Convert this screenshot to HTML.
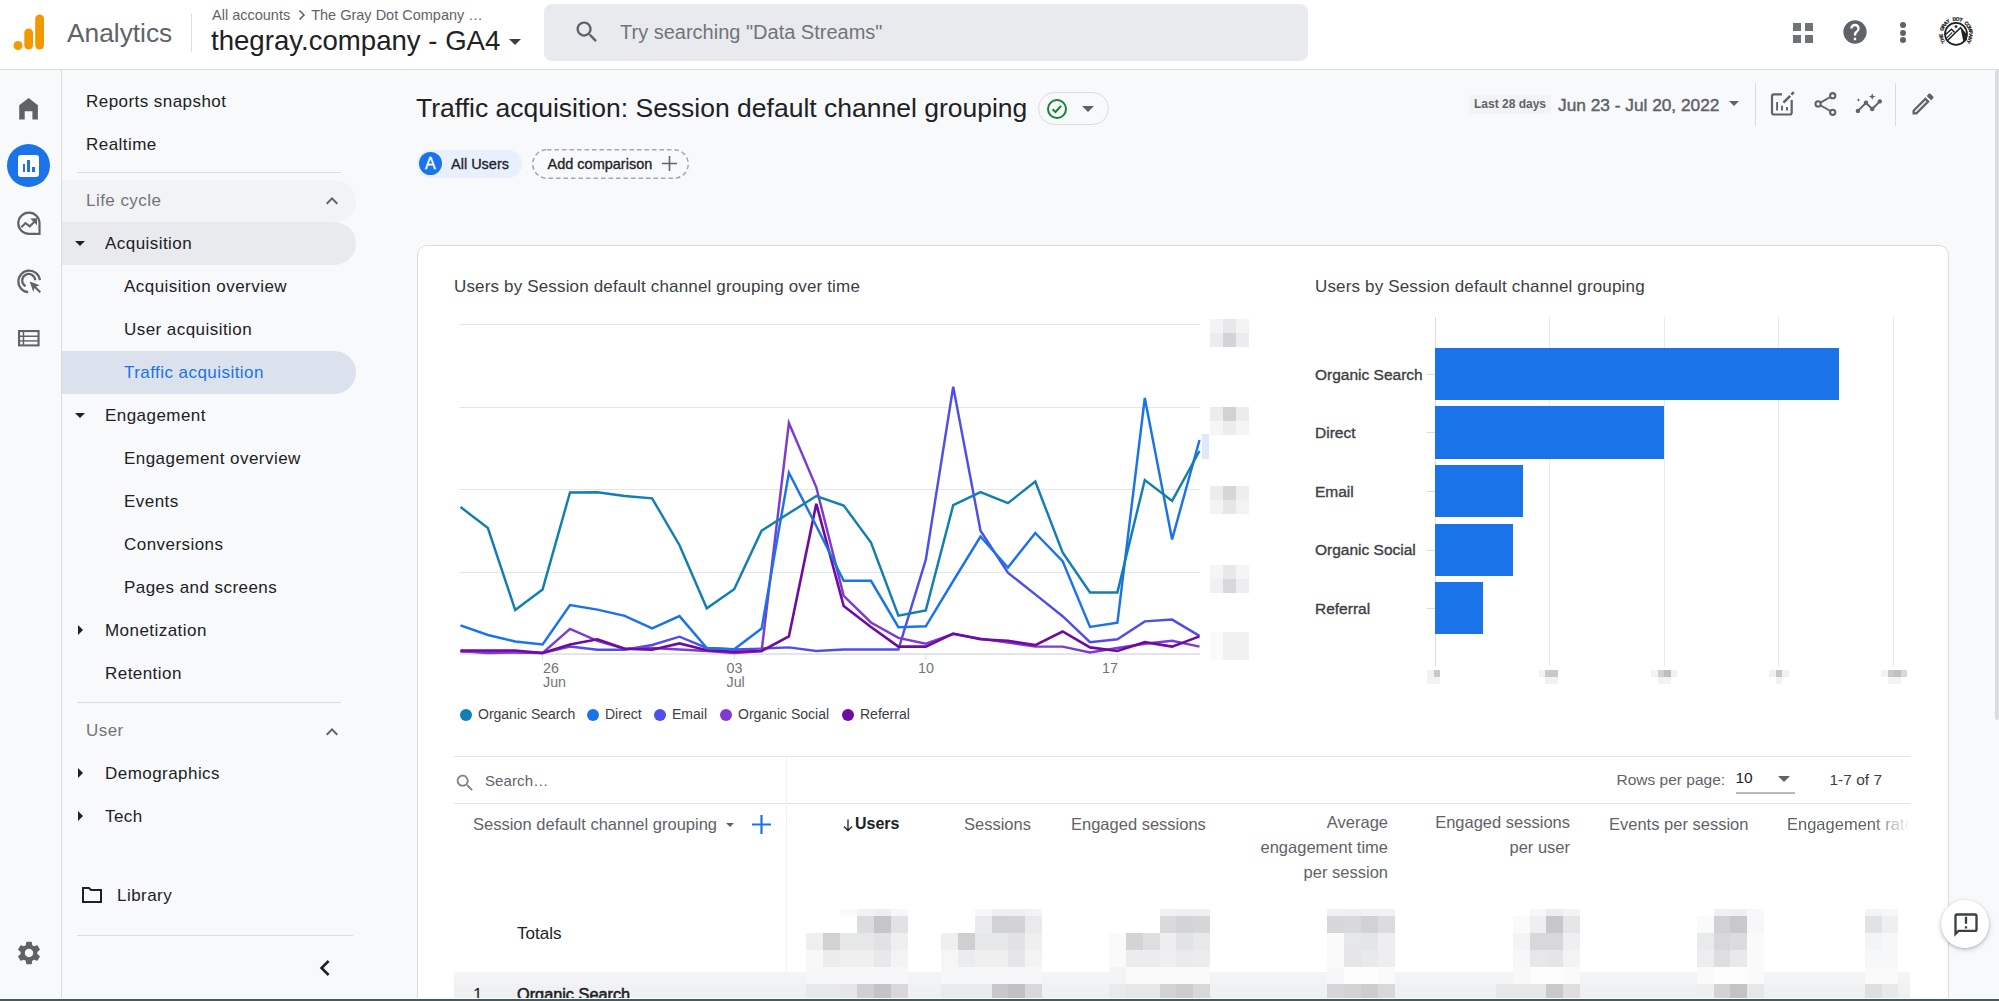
<!DOCTYPE html>
<html><head><meta charset="utf-8">
<style>
*{box-sizing:border-box;margin:0;padding:0}
html,body{width:1999px;height:1001px;overflow:hidden;background:#f8f9fa;font-family:"Liberation Sans",sans-serif;color:#202124}
.a{position:absolute;white-space:nowrap}
#hdr{position:absolute;left:0;top:0;width:1999px;height:70px;background:#fff;border-bottom:1px solid #dadce0}
#rail{position:absolute;left:0;top:70px;width:62px;height:931px;border-right:1px solid #dadce0;background:#f8f9fa}
.nav{font-size:17px;letter-spacing:0.45px;color:#202124}
.pill{position:absolute;left:62px;width:294px;border-radius:0 22px 22px 0}
</style></head><body>
<div id="hdr">
  <!-- logo -->
  <svg class="a" style="left:12px;top:13px" width="34" height="38" viewBox="0 0 34 38">
    <circle cx="6" cy="32.5" r="4.5" fill="#f29900"/>
    <rect x="12.3" y="15.5" width="8.7" height="21" rx="4.35" fill="#f29900"/>
    <rect x="23.2" y="1.5" width="8.8" height="35" rx="4.4" fill="#f29900"/>
  </svg>
  <div class="a" style="left:67px;top:17.5px;font-size:26.3px;color:#5f6368">Analytics</div>
  <div class="a" style="left:191px;top:13.5px;width:1px;height:38px;background:#dadce0"></div>
  <div class="a" style="left:212px;top:7px;font-size:14.5px;color:#5f6368">All accounts<span style="display:inline-block;width:21px"></span>The Gray Dot Company …</div>
  <svg class="a" style="left:297px;top:9px" width="10" height="12" viewBox="0 0 10 12"><path d="M2.5 1.5L7 6l-4.5 4.5" fill="none" stroke="#5f6368" stroke-width="1.6"/></svg>
  <div class="a" style="left:211px;top:25px;font-size:27.6px;color:#202124">thegray.company - GA4</div>
  <div class="a" style="left:509px;top:39px;border-left:6px solid transparent;border-right:6px solid transparent;border-top:6px solid #3c4043"></div>
  <!-- search -->
  <div class="a" style="left:544px;top:4px;width:764px;height:57px;background:#e9eaee;border-radius:8px"></div>
  <div class="a" style="left:620px;top:21px;font-size:20px;color:#70757a">Try searching "Data Streams"</div>
</div>

<div id="rail">
  <svg class="a" style="left:0;top:0" width="62" height="130"><path fill="#5f6368" d="M19.2 49.6V35.3L28.6 28.1L37.9 35.3V49.6H32.4V41.3H24.7V49.6Z"/></svg>
</div>
<div class="a" style="left:7.1px;top:144.3px;width:43px;height:43px;border-radius:50%;background:#1a73e8"></div>
<div class="a" style="left:18.1px;top:155.3px;width:21px;height:21.4px;border-radius:3px;background:#fff"></div>
<div class="a" style="left:22.5px;top:164px;width:2.5px;height:7.8px;background:#1a73e8"></div>
<div class="a" style="left:27.3px;top:160.2px;width:2.6px;height:11.6px;background:#1a73e8"></div>
<div class="a" style="left:32.4px;top:167.4px;width:2.5px;height:4.4px;background:#1a73e8"></div>
<svg class="a" style="left:15px;top:210px" width="28" height="28" viewBox="0 0 28 28"><path d="M24.5 13.2V23.8H13.9A10.6 10.6 0 1 1 24.5 13.2Z" fill="none" stroke="#5f6368" stroke-width="2.2"/><path d="M6.3 17.3L10.5 13.1L14.8 16.4L19.8 11.3" fill="none" stroke="#5f6368" stroke-width="2.1"/><path d="M15.3 8.6L22.2 8.3L21.9 15.2Z" fill="#5f6368"/><circle cx="22.3" cy="21.6" r="1" fill="#fff"/></svg>
<svg class="a" style="left:15px;top:267px" width="28" height="28" viewBox="0 0 28 28"><path d="M13.2 25.2A10.8 10.8 0 1 1 24.9 13.2" fill="none" stroke="#5f6368" stroke-width="2.2"/><path d="M10.6 19.2A6.5 6.5 0 1 1 20.2 13.3" fill="none" stroke="#5f6368" stroke-width="2.2"/><path d="M14.6 14.6L24.8 18.3L21 19.5L26 24.5L24.5 26L19.5 21L18.3 24.8Z" fill="#5f6368"/></svg>
<svg class="a" style="left:18px;top:330px" width="22" height="17" viewBox="0 0 22 17"><rect width="21.6" height="16.4" fill="#5f6368"/><g fill="#f8f9fa"><rect x="2.1" y="2.1" width="2.6" height="3.4"/><rect x="6.2" y="2.1" width="13.3" height="3.4"/><rect x="2.1" y="7" width="2.6" height="3.2"/><rect x="6.2" y="7" width="13.3" height="3.2"/><rect x="2.1" y="11.6" width="2.6" height="2.8"/><rect x="6.2" y="11.6" width="13.3" height="2.8"/></g></svg>
<svg class="a" style="left:14.5px;top:938.5px" width="28" height="28" viewBox="0 0 24 24"><path fill="#5f6368" d="M19.14 12.94c.04-.3.06-.61.06-.94 0-.32-.02-.64-.07-.94l2.03-1.58c.18-.14.23-.41.12-.61l-1.92-3.32c-.12-.22-.37-.29-.59-.22l-2.39.96c-.5-.38-1.03-.7-1.62-.94l-.36-2.54c-.04-.24-.24-.41-.48-.41h-3.84c-.24 0-.43.17-.47.41l-.36 2.54c-.59.24-1.130.57-1.62.94l-2.39-.96c-.22-.08-.47 0-.59.22L2.74 8.87c-.12.21-.08.47.12.61l2.03 1.58c-.05.3-.09.63-.09.94s.02.64.07.94l-2.03 1.58c-.18.14-.23.41-.12.61l1.92 3.32c.12.22.37.29.59.22l2.39-.96c.5.38 1.03.7 1.62.94l.36 2.54c.05.24.24.41.48.41h3.840c.24 0 .44-.17.47-.41l.36-2.54c.59-.24 1.13-.56 1.62-.94l2.39.96c.22.08.47 0 .59-.22l1.92-3.32c.12-.22.07-.47-.12-.61l-2.01-1.58zM12 15.6c-1.98 0-3.6-1.62-3.6-3.6s1.62-3.6 3.6-3.6 3.6 1.62 3.6 3.6-1.62 3.6-3.6 3.6z"/></svg>

<!-- nav panel -->
<div class="pill" style="top:180px;height:42px;background:#f1f3f4"></div>
<div class="pill" style="top:222px;height:43px;background:#e8eaed"></div>
<div class="pill" style="top:351px;height:43px;background:#dbe2ee"></div>
<div class="a" style="left:77px;top:172px;width:264px;height:1px;background:#dadce0"></div>
<div class="a" style="left:77px;top:702px;width:264px;height:1px;background:#dadce0"></div>
<div class="a" style="left:77px;top:935px;width:276px;height:1px;background:#dadce0"></div>
<div class="a nav" style="left:86px;top:92px">Reports snapshot</div>
<div class="a nav" style="left:86px;top:135px">Realtime</div>
<div class="a nav" style="left:86px;top:191px;color:#70757a">Life cycle</div>
<div class="a nav" style="left:105px;top:234px">Acquisition</div>
<div class="a nav" style="left:124px;top:277px">Acquisition overview</div>
<div class="a nav" style="left:124px;top:320px">User acquisition</div>
<div class="a nav" style="left:124px;top:363px;color:#1a73e8">Traffic acquisition</div>
<div class="a nav" style="left:105px;top:406px">Engagement</div>
<div class="a nav" style="left:124px;top:449px">Engagement overview</div>
<div class="a nav" style="left:124px;top:492px">Events</div>
<div class="a nav" style="left:124px;top:535px">Conversions</div>
<div class="a nav" style="left:124px;top:578px">Pages and screens</div>
<div class="a nav" style="left:105px;top:621px">Monetization</div>
<div class="a nav" style="left:105px;top:664px">Retention</div>
<div class="a nav" style="left:86px;top:721px;color:#70757a">User</div>
<div class="a nav" style="left:105px;top:764px">Demographics</div>
<div class="a nav" style="left:105px;top:807px">Tech</div>
<div class="a nav" style="left:117px;top:886px">Library</div>
<!-- triangles -->
<div class="a" style="left:75px;top:241px;border-left:5px solid transparent;border-right:5px solid transparent;border-top:5px solid #202124"></div>
<div class="a" style="left:75px;top:413px;border-left:5px solid transparent;border-right:5px solid transparent;border-top:5px solid #202124"></div>
<div class="a" style="left:78px;top:625px;border-top:5px solid transparent;border-bottom:5px solid transparent;border-left:5px solid #202124"></div>
<div class="a" style="left:78px;top:768px;border-top:5px solid transparent;border-bottom:5px solid transparent;border-left:5px solid #202124"></div>
<div class="a" style="left:78px;top:811px;border-top:5px solid transparent;border-bottom:5px solid transparent;border-left:5px solid #202124"></div>
<svg class="a" style="left:319.5px;top:189.3px" width="24" height="24" viewBox="0 0 24 24"><path fill="#5f6368" d="M12 8l-6 6 1.41 1.41L12 10.83l4.59 4.58L18 14z"/></svg>
<svg class="a" style="left:319.5px;top:719.5px" width="24" height="24" viewBox="0 0 24 24"><path fill="#5f6368" d="M12 8l-6 6 1.41 1.41L12 10.83l4.59 4.58L18 14z"/></svg>
<svg class="a" style="left:80px;top:884px" width="24" height="22" viewBox="0 0 24 22"><path fill="none" stroke="#202124" stroke-width="2" d="M3 4h6l2 2h10v12H3z"/></svg>
<svg class="a" style="left:308.5px;top:951.5px" width="32" height="32" viewBox="0 0 24 24"><path fill="#202124" d="M15.41 7.41L14 6l-6 6 6 6 1.41-1.41L10.83 12z"/></svg>


<!-- header right icons -->
<svg class="a" style="left:572.5px;top:18px" width="28" height="28" viewBox="0 0 24 24"><path fill="#5f6368" d="M15.5 14h-.79l-.28-.27C15.41 12.59 16 11.11 16 9.5 16 5.91 13.09 3 9.5 3S3 5.91 3 9.5 5.91 16 9.5 16c1.61 0 3.090-.59 4.23-1.57l.27.28v.79l5 4.99L20.49 19l-4.99-5zm-6 0C7.01 14 5 11.99 5 9.5S7.01 5 9.5 5 14 7.01 14 9.5 11.99 14 9.5 14z"/></svg>
<div class="a" style="left:1793px;top:23px;width:8px;height:8px;background:#6f7276"></div>
<div class="a" style="left:1805px;top:23px;width:8px;height:8px;background:#6f7276"></div>
<div class="a" style="left:1793px;top:35px;width:8px;height:8px;background:#6f7276"></div>
<div class="a" style="left:1805px;top:35px;width:8px;height:8px;background:#6f7276"></div>
<svg class="a" style="left:1841px;top:18px" width="28" height="28" viewBox="0 0 24 24"><path fill="#5f6368" d="M12 2C6.480 2 2 6.48 2 12s4.48 10 10 10 10-4.48 10-10S17.52 2 12 2zm1 17h-2v-2h2v2zm2.07-7.75l-.9.92C13.45 12.9 13 13.5 13 15h-2v-.5c0-1.1.45-2.1 1.17-2.83l1.24-1.26c.37-.36.59-.86.59-1.410 0-1.1-.9-2-2-2s-2 .9-2 2H8c0-2.21 1.79-4 4-4s4 1.79 4 4c0 .88-.36 1.68-.93 2.25z"/></svg>
<div class="a" style="left:1900px;top:22px;width:6px;height:6px;border-radius:50%;background:#5f6368"></div>
<div class="a" style="left:1900px;top:29.5px;width:6px;height:6px;border-radius:50%;background:#5f6368"></div>
<div class="a" style="left:1900px;top:37px;width:6px;height:6px;border-radius:50%;background:#5f6368"></div>
<svg class="a" style="left:1937px;top:14px" width="38" height="38" viewBox="0 0 38 38">
 <circle cx="19" cy="19.9" r="11" fill="#fff" stroke="#202124" stroke-width="1.7"/>
 <path d="M10.5 26.5L23.5 13.6L30 22" fill="none" stroke="#202124" stroke-width="1.5"/>
 <path d="M23.5 13.6L30 21.5L29.8 26L26.5 28.5L25.5 23.5z" fill="#202124"/>
 <path d="M8 21L14.5 15.2L17.5 18.2" fill="none" stroke="#202124" stroke-width="1.5"/>
 <path d="M9.3 24.3L15.2 18.3" stroke="#202124" stroke-width="1.1"/>
 <circle cx="19" cy="12.6" r="1.4" fill="#202124"/>
 <text x="0" y="0" transform="translate(7.76 26.82) rotate(238.4)" text-anchor="middle" font-family="Liberation Sans" font-weight="bold" font-size="5" fill="#202124" stroke="#202124" stroke-width="0.25">T</text><text x="0" y="0" transform="translate(6.50 24.15) rotate(251.2)" text-anchor="middle" font-family="Liberation Sans" font-weight="bold" font-size="5" fill="#202124" stroke="#202124" stroke-width="0.25">H</text><text x="0" y="0" transform="translate(5.87 21.28) rotate(264.0)" text-anchor="middle" font-family="Liberation Sans" font-weight="bold" font-size="5" fill="#202124" stroke="#202124" stroke-width="0.25">E</text><text x="0" y="0" transform="translate(6.56 15.47) rotate(289.6)" text-anchor="middle" font-family="Liberation Sans" font-weight="bold" font-size="5" fill="#202124" stroke="#202124" stroke-width="0.25">G</text><text x="0" y="0" transform="translate(7.85 12.83) rotate(302.4)" text-anchor="middle" font-family="Liberation Sans" font-weight="bold" font-size="5" fill="#202124" stroke="#202124" stroke-width="0.25">R</text><text x="0" y="0" transform="translate(9.70 10.53) rotate(315.2)" text-anchor="middle" font-family="Liberation Sans" font-weight="bold" font-size="5" fill="#202124" stroke="#202124" stroke-width="0.25">A</text><text x="0" y="0" transform="translate(12.01 8.71) rotate(328.0)" text-anchor="middle" font-family="Liberation Sans" font-weight="bold" font-size="5" fill="#202124" stroke="#202124" stroke-width="0.25">Y</text><text x="0" y="0" transform="translate(17.53 6.78) rotate(353.6)" text-anchor="middle" font-family="Liberation Sans" font-weight="bold" font-size="5" fill="#202124" stroke="#202124" stroke-width="0.25">D</text><text x="0" y="0" transform="translate(20.47 6.78) rotate(366.4)" text-anchor="middle" font-family="Liberation Sans" font-weight="bold" font-size="5" fill="#202124" stroke="#202124" stroke-width="0.25">O</text><text x="0" y="0" transform="translate(23.34 7.43) rotate(379.2)" text-anchor="middle" font-family="Liberation Sans" font-weight="bold" font-size="5" fill="#202124" stroke="#202124" stroke-width="0.25">T</text><text x="0" y="0" transform="translate(28.30 10.53) rotate(404.8)" text-anchor="middle" font-family="Liberation Sans" font-weight="bold" font-size="5" fill="#202124" stroke="#202124" stroke-width="0.25">C</text><text x="0" y="0" transform="translate(30.15 12.83) rotate(417.6)" text-anchor="middle" font-family="Liberation Sans" font-weight="bold" font-size="5" fill="#202124" stroke="#202124" stroke-width="0.25">O</text><text x="0" y="0" transform="translate(31.44 15.47) rotate(430.4)" text-anchor="middle" font-family="Liberation Sans" font-weight="bold" font-size="5" fill="#202124" stroke="#202124" stroke-width="0.25">M</text><text x="0" y="0" transform="translate(32.11 18.34) rotate(443.2)" text-anchor="middle" font-family="Liberation Sans" font-weight="bold" font-size="5" fill="#202124" stroke="#202124" stroke-width="0.25">P</text><text x="0" y="0" transform="translate(32.13 21.28) rotate(456.0)" text-anchor="middle" font-family="Liberation Sans" font-weight="bold" font-size="5" fill="#202124" stroke="#202124" stroke-width="0.25">A</text><text x="0" y="0" transform="translate(31.50 24.15) rotate(468.8)" text-anchor="middle" font-family="Liberation Sans" font-weight="bold" font-size="5" fill="#202124" stroke="#202124" stroke-width="0.25">N</text><text x="0" y="0" transform="translate(30.24 26.82) rotate(481.6)" text-anchor="middle" font-family="Liberation Sans" font-weight="bold" font-size="5" fill="#202124" stroke="#202124" stroke-width="0.25">Y</text>
</svg>

<!-- title -->
<div class="a" style="left:416px;top:93px;font-size:26.5px;color:#202124">Traffic acquisition: Session default channel grouping</div>
<div class="a" style="left:1038px;top:92px;width:71px;height:33px;border:1px solid #dadce0;border-radius:17px"></div>
<div class="a" style="left:1047px;top:99px;width:20px;height:20px;border:2px solid #188038;border-radius:50%"></div>
<svg class="a" style="left:1051px;top:103px" width="12" height="12" viewBox="0 0 12 12"><path d="M1.5 6.2l3 2.8 5.5-6" fill="none" stroke="#188038" stroke-width="2"/></svg>
<div class="a" style="left:1082px;top:106px;border-left:6px solid transparent;border-right:6px solid transparent;border-top:6px solid #5f6368"></div>

<!-- chips -->
<div class="a" style="left:417px;top:150px;width:105px;height:28px;border-radius:14px;background:#e8f0fe"></div>
<div class="a" style="left:418.5px;top:151.8px;width:23.5px;height:23.5px;border-radius:50%;background:#1a73e8;color:#fff;font-size:16px;text-align:center;line-height:23.5px;-webkit-text-stroke:0.3px #fff">A</div>
<div class="a" style="left:451px;top:155.8px;font-size:14.5px;color:#202124;-webkit-text-stroke:0.3px #202124">All Users</div>
<svg class="a" style="left:532px;top:149px" width="157" height="30"><rect x="0.75" y="0.75" width="155.5" height="28.5" rx="14.25" fill="none" stroke="#a3a7ab" stroke-width="1.5" stroke-dasharray="4.5 3"/></svg>
<div class="a" style="left:547.5px;top:155.8px;font-size:14.5px;color:#202124;-webkit-text-stroke:0.3px #202124">Add comparison</div>
<svg class="a" style="left:661px;top:155px" width="17" height="17" viewBox="0 0 17 17"><path d="M8.5 1v15M1 8.5h15" stroke="#5f6368" stroke-width="1.6"/></svg>

<!-- date range -->
<div class="a" style="left:1469px;top:95px;width:82px;height:19px;background:#f1f3f4;border-radius:2px"></div>
<div class="a" style="left:1474px;top:97px;font-size:12px;font-weight:bold;color:#5f6368">Last 28 days</div>
<div class="a" style="left:1558px;top:94.7px;font-size:17.3px;color:#5f6368;-webkit-text-stroke:0.45px #5f6368">Jun 23 - Jul 20, 2022</div>
<div class="a" style="left:1729px;top:101px;border-left:5.5px solid transparent;border-right:5.5px solid transparent;border-top:5.5px solid #5f6368"></div>
<div class="a" style="left:1755px;top:83px;width:1px;height:43px;background:#dadce0"></div>
<div class="a" style="left:1895px;top:83px;width:1px;height:43px;background:#dadce0"></div>
<svg class="a" style="left:1760px;top:80px" width="140" height="50" viewBox="0 0 140 50" fill="none" stroke="#5f6368">
<path d="M22 14.4H14a2 2 0 0 0-2 2V32.5a2 2 0 0 0 2 2H29.7a2 2 0 0 0 2-2V20" stroke-width="2.2"/>
<path d="M17.1 21.9V30.4M22 25.7V30.4M27 27.1V30.4" stroke-width="1.9"/>
<path d="M23.4 22.6L30.2 15.8M31.4 14.6L33.8 12.2" stroke-width="2.6"/>
<circle cx="72.7" cy="15.7" r="2.6" stroke-width="2.1"/><circle cx="58.1" cy="23.9" r="2.6" stroke-width="2.1"/><circle cx="72.7" cy="32.3" r="2.6" stroke-width="2.1"/>
<path d="M60.4 22.6L70.4 17M60.4 25.2L70.4 31" stroke-width="1.9"/>
<path d="M97.9 30.9L106 22.8L112.2 29L119.8 21.4" stroke-width="2"/>
<g fill="#5f6368" stroke="none"><circle cx="97.9" cy="30.9" r="2.2"/><circle cx="106" cy="22.8" r="2.2"/><circle cx="112.2" cy="29" r="2.2"/><circle cx="119.8" cy="21.4" r="2.2"/>
<path d="M112.2 13.2L113.1 15.7L115.6 16.6L113.1 17.5L112.2 20L111.3 17.5L108.8 16.6L111.3 15.7Z"/>
<path d="M98.4 17.9L98.9 19.5L100.5 20L98.9 20.5L98.4 22.1L97.9 20.5L96.3 20L97.9 19.5Z"/></g>
</svg>
<svg class="a" style="left:1909px;top:90px" width="28" height="28" viewBox="0 0 24 24"><path fill="#5f6368" d="M14.06 9.02l.92.92L5.92 19H5v-.92l9.06-9.06M17.66 3c-.25 0-.51.1-.7.29l-1.83 1.83 3.75 3.75 1.83-1.83c.39-.39.39-1.02 0-1.41l-2.34-2.34c-.2-.2-.45-.29-.71-.29zm-3.6 3.19L3 17.25V21h3.75L17.81 9.94l-3.75-3.75z"/></svg>


<div id="card" class="a" style="left:417px;top:245px;width:1532px;height:800px;background:#fff;border:1px solid #dadce0;border-radius:10px"></div>
<div class="a" style="left:454px;top:277px;font-size:17px;letter-spacing:0.16px;color:#3c4043">Users by Session default channel grouping over time</div>
<div class="a" style="left:1315px;top:277px;font-size:17px;letter-spacing:0.16px;color:#3c4043">Users by Session default channel grouping</div>
<svg class="a" style="left:0;top:0" width="1999" height="1001">
<line x1="460" x2="1200" y1="324.5" y2="324.5" stroke="#e3e5e8" stroke-width="1"/>
<line x1="460" x2="1200" y1="407.5" y2="407.5" stroke="#e3e5e8" stroke-width="1"/>
<line x1="460" x2="1200" y1="489.5" y2="489.5" stroke="#e3e5e8" stroke-width="1"/>
<line x1="460" x2="1200" y1="572.5" y2="572.5" stroke="#e3e5e8" stroke-width="1"/>
<line x1="460" x2="1200" y1="654" y2="654" stroke="#dadce0" stroke-width="1.3"/>
<line x1="542.5" x2="542.5" y1="654" y2="660" stroke="#dadce0"/><line x1="734.3" x2="734.3" y1="654" y2="660" stroke="#dadce0"/><line x1="925.8" x2="925.8" y1="654" y2="660" stroke="#dadce0"/><line x1="1117.4" x2="1117.4" y1="654" y2="660" stroke="#dadce0"/>
<polyline fill="none" stroke="#4f4ee8" stroke-width="2.45" stroke-linejoin="miter" points="460.5,651.5 487.9,652.0 515.2,652.0 542.6,653.0 570.0,646.6 597.4,649.8 624.7,649.8 652.1,645.0 679.5,636.7 706.8,648.0 734.2,649.5 761.6,648.6 788.9,647.4 816.3,651.0 843.7,649.5 871.0,649.5 898.4,649.5 925.8,559.7 953.2,386.8 980.5,530.7 1007.9,572.7 1035.3,594.4 1062.6,616.2 1090.0,642.2 1117.4,639.3 1144.8,621.4 1172.1,619.6 1199.5,635.9"/>
<polyline fill="none" stroke="#7d3bd2" stroke-width="2.45" stroke-linejoin="miter" points="460.5,651.0 487.9,653.0 515.2,652.5 542.6,653.0 570.0,628.9 597.4,640.8 624.7,648.8 652.1,648.0 679.5,649.5 706.8,651.0 734.2,653.0 761.6,651.0 788.9,423.0 816.3,487.3 843.7,595.9 871.0,622.5 898.4,637.9 925.8,643.7 953.2,634.1 980.5,638.8 1007.9,642.5 1035.3,646.6 1062.6,646.6 1090.0,652.4 1117.4,648.0 1144.8,643.7 1172.1,640.8 1199.5,646.6"/>
<polyline fill="none" stroke="#700aa0" stroke-width="2.6" stroke-linejoin="miter" points="460.5,650.5 487.9,650.5 515.2,650.5 542.6,653.0 570.0,644.4 597.4,639.3 624.7,648.8 652.1,649.8 679.5,643.4 706.8,650.2 734.2,651.7 761.6,651.0 788.9,636.4 816.3,503.8 843.7,606.0 871.0,627.0 898.4,646.6 925.8,646.6 953.2,633.5 980.5,639.3 1007.9,640.8 1035.3,645.1 1062.6,631.5 1090.0,647.4 1117.4,651.0 1144.8,642.2 1172.1,646.6 1199.5,636.4"/>
<polyline fill="none" stroke="#1a73e8" stroke-width="2.45" stroke-linejoin="miter" points="460.5,625.3 487.9,635.0 515.2,641.5 542.6,644.4 570.0,605.0 597.4,609.6 624.7,615.8 652.1,628.4 679.5,616.1 706.8,648.0 734.2,649.3 761.6,628.6 788.9,472.8 816.3,526.0 843.7,580.8 871.0,580.8 898.4,627.2 925.8,626.3 953.2,581.0 980.5,536.5 1007.9,567.5 1035.3,533.0 1062.6,561.1 1090.0,626.9 1117.4,622.8 1144.8,398.0 1172.1,539.4 1199.5,440.0"/>
<polyline fill="none" stroke="#127eb3" stroke-width="2.45" stroke-linejoin="miter" points="460.5,507.0 487.9,528.0 515.2,610.0 542.6,589.4 570.0,492.5 597.4,492.2 624.7,496.0 652.1,498.3 679.5,545.2 706.8,608.3 734.2,589.2 761.6,530.7 788.9,513.3 816.3,496.0 843.7,505.5 871.0,542.5 898.4,615.6 925.8,610.4 953.2,505.2 980.5,492.2 1007.9,503.2 1035.3,481.5 1062.6,552.4 1090.0,592.4 1117.4,592.4 1144.8,480.0 1172.1,500.9 1199.5,451.0"/>
</svg>
<div class="a" style="left:1210px;top:319.0px;width:13px;height:14px;background:#f3f3f4"></div><div class="a" style="left:1223px;top:319.0px;width:13px;height:14px;background:#e8e8ea"></div><div class="a" style="left:1236px;top:319.0px;width:13px;height:14px;background:#f3f3f4"></div><div class="a" style="left:1210px;top:332.5px;width:13px;height:14px;background:#ececee"></div><div class="a" style="left:1223px;top:332.5px;width:13px;height:14px;background:#d4d4d7"></div><div class="a" style="left:1236px;top:332.5px;width:13px;height:14px;background:#ececee"></div><div class="a" style="left:1210px;top:407.0px;width:13px;height:14px;background:#ececee"></div><div class="a" style="left:1223px;top:407.0px;width:13px;height:14px;background:#d2d2d5"></div><div class="a" style="left:1236px;top:407.0px;width:13px;height:14px;background:#ececee"></div><div class="a" style="left:1210px;top:420.5px;width:13px;height:14px;background:#f5f5f6"></div><div class="a" style="left:1223px;top:420.5px;width:13px;height:14px;background:#ececee"></div><div class="a" style="left:1236px;top:420.5px;width:13px;height:14px;background:#f5f5f6"></div><div class="a" style="left:1210px;top:486.0px;width:13px;height:14px;background:#ececee"></div><div class="a" style="left:1223px;top:486.0px;width:13px;height:14px;background:#d6d6d9"></div><div class="a" style="left:1236px;top:486.0px;width:13px;height:14px;background:#eeeef0"></div><div class="a" style="left:1210px;top:499.5px;width:13px;height:14px;background:#f3f3f4"></div><div class="a" style="left:1223px;top:499.5px;width:13px;height:14px;background:#e6e6e8"></div><div class="a" style="left:1236px;top:499.5px;width:13px;height:14px;background:#f3f3f4"></div><div class="a" style="left:1210px;top:565.0px;width:13px;height:14px;background:#f5f5f6"></div><div class="a" style="left:1223px;top:565.0px;width:13px;height:14px;background:#e8e8ea"></div><div class="a" style="left:1236px;top:565.0px;width:13px;height:14px;background:#f5f5f6"></div><div class="a" style="left:1210px;top:578.5px;width:13px;height:14px;background:#f0f0f2"></div><div class="a" style="left:1223px;top:578.5px;width:13px;height:14px;background:#d8d8db"></div><div class="a" style="left:1236px;top:578.5px;width:13px;height:14px;background:#eeeef0"></div><div class="a" style="left:1210px;top:632.0px;width:13px;height:14px;background:#fafafa"></div><div class="a" style="left:1223px;top:632.0px;width:13px;height:14px;background:#f1f1f2"></div><div class="a" style="left:1236px;top:632.0px;width:13px;height:14px;background:#f1f1f2"></div><div class="a" style="left:1210px;top:645.5px;width:13px;height:14px;background:#fafafa"></div><div class="a" style="left:1223px;top:645.5px;width:13px;height:14px;background:#f1f1f2"></div><div class="a" style="left:1236px;top:645.5px;width:13px;height:14px;background:#f1f1f2"></div><div class="a" style="left:1202px;top:434px;width:7px;height:25px;background:#dfe8fb"></div>
<div class="a" style="left:543px;top:660.8px;font-size:14.3px;color:#70757a;line-height:14px">26<br>Jun</div>
<div class="a" style="left:726.5px;top:660.8px;font-size:14.3px;color:#70757a;line-height:14px">03<br>Jul</div>
<div class="a" style="left:918px;top:660px;font-size:14.3px;color:#70757a">10</div>
<div class="a" style="left:1102px;top:660px;font-size:14.3px;color:#70757a">17</div>
<!-- legend -->
<div class="a" style="left:460px;top:708.7px;width:12px;height:12px;border-radius:50%;background:#127eb3"></div>
<div class="a" style="left:478px;top:706px;font-size:14px;color:#3c4043">Organic Search</div>
<div class="a" style="left:587px;top:708.7px;width:12px;height:12px;border-radius:50%;background:#1a73e8"></div>
<div class="a" style="left:605px;top:706px;font-size:14px;color:#3c4043">Direct</div>
<div class="a" style="left:654px;top:708.7px;width:12px;height:12px;border-radius:50%;background:#4f4ee8"></div>
<div class="a" style="left:672px;top:706px;font-size:14px;color:#3c4043">Email</div>
<div class="a" style="left:720px;top:708.7px;width:12px;height:12px;border-radius:50%;background:#7d3bd2"></div>
<div class="a" style="left:738px;top:706px;font-size:14px;color:#3c4043">Organic Social</div>
<div class="a" style="left:842px;top:708.7px;width:12px;height:12px;border-radius:50%;background:#700aa0"></div>
<div class="a" style="left:860px;top:706px;font-size:14px;color:#3c4043">Referral</div>
<!-- bar chart -->
<div class="a" style="left:1435px;top:317px;width:1px;height:349px;background:#dadce0"></div>
<div class="a" style="left:1549px;top:317px;width:1px;height:349px;background:#e8eaed"></div>
<div class="a" style="left:1664px;top:317px;width:1px;height:349px;background:#e8eaed"></div>
<div class="a" style="left:1778px;top:317px;width:1px;height:349px;background:#e8eaed"></div>
<div class="a" style="left:1893px;top:317px;width:1px;height:349px;background:#e8eaed"></div>
<div class="a" style="left:1435px;top:348px;width:404px;height:52px;background:#1a73e8"></div>
<div class="a" style="left:1435px;top:406px;width:229px;height:53px;background:#1a73e8"></div>
<div class="a" style="left:1435px;top:465px;width:88px;height:52px;background:#1a73e8"></div>
<div class="a" style="left:1435px;top:524px;width:78px;height:52px;background:#1a73e8"></div>
<div class="a" style="left:1435px;top:582px;width:48px;height:52px;background:#1a73e8"></div>
<div class="a" style="left:1315px;top:365.5px;font-size:15.5px;color:#3c4043;-webkit-text-stroke:0.35px #3c4043">Organic Search</div>
<div class="a" style="left:1315px;top:424px;font-size:15.5px;color:#3c4043;-webkit-text-stroke:0.35px #3c4043">Direct</div>
<div class="a" style="left:1315px;top:482.5px;font-size:15.5px;color:#3c4043;-webkit-text-stroke:0.35px #3c4043">Email</div>
<div class="a" style="left:1315px;top:541px;font-size:15.5px;color:#3c4043;-webkit-text-stroke:0.35px #3c4043">Organic Social</div>
<div class="a" style="left:1315px;top:599.5px;font-size:15.5px;color:#3c4043;-webkit-text-stroke:0.35px #3c4043">Referral</div>
<div class="a" style="left:1427px;top:374px;width:8px;height:1px;background:#dadce0"></div>
<div class="a" style="left:1427px;top:432px;width:8px;height:1px;background:#dadce0"></div>
<div class="a" style="left:1427px;top:491px;width:8px;height:1px;background:#dadce0"></div>
<div class="a" style="left:1427px;top:550px;width:8px;height:1px;background:#dadce0"></div>
<div class="a" style="left:1427px;top:608px;width:8px;height:1px;background:#dadce0"></div>

<div class="a" style="left:1427.3px;top:670px;width:6.6px;height:7px;background:#f1f1f2"></div><div class="a" style="left:1433.8px;top:670px;width:6.6px;height:7px;background:#c9c9cc"></div><div class="a" style="left:1427.3px;top:677px;width:6.6px;height:7px;background:#f3f3f4"></div><div class="a" style="left:1433.8px;top:677px;width:6.6px;height:7px;background:#f3f3f4"></div><div class="a" style="left:1538.7px;top:670px;width:6.6px;height:7px;background:#f3f3f4"></div><div class="a" style="left:1545.2px;top:670px;width:6.6px;height:7px;background:#c8c8cb"></div><div class="a" style="left:1551.7px;top:670px;width:6.6px;height:7px;background:#c8c8cb"></div><div class="a" style="left:1545.2px;top:677px;width:6.6px;height:7px;background:#f1f1f2"></div><div class="a" style="left:1551.7px;top:677px;width:6.6px;height:7px;background:#f3f3f4"></div><div class="a" style="left:1651.0px;top:670px;width:6.6px;height:7px;background:#f3f3f4"></div><div class="a" style="left:1657.5px;top:670px;width:6.6px;height:7px;background:#d0d0d3"></div><div class="a" style="left:1664.0px;top:670px;width:6.6px;height:7px;background:#bdbdc0"></div><div class="a" style="left:1670.5px;top:670px;width:6.6px;height:7px;background:#f1f1f2"></div><div class="a" style="left:1657.5px;top:677px;width:6.6px;height:7px;background:#f1f1f2"></div><div class="a" style="left:1664.0px;top:677px;width:6.6px;height:7px;background:#f3f3f4"></div><div class="a" style="left:1769.4px;top:670px;width:6.6px;height:7px;background:#f1f1f2"></div><div class="a" style="left:1775.9px;top:670px;width:6.6px;height:7px;background:#c6c6c9"></div><div class="a" style="left:1782.4px;top:670px;width:6.6px;height:7px;background:#f1f1f2"></div><div class="a" style="left:1775.9px;top:677px;width:6.6px;height:7px;background:#f1f1f2"></div><div class="a" style="left:1881.0px;top:670px;width:6.6px;height:7px;background:#f3f3f4"></div><div class="a" style="left:1887.5px;top:670px;width:6.6px;height:7px;background:#c8c8cb"></div><div class="a" style="left:1894.0px;top:670px;width:6.6px;height:7px;background:#c0c0c3"></div><div class="a" style="left:1900.5px;top:670px;width:6.6px;height:7px;background:#d8d8da"></div><div class="a" style="left:1887.5px;top:677px;width:6.6px;height:7px;background:#f3f3f4"></div><div class="a" style="left:1894.0px;top:677px;width:6.6px;height:7px;background:#f3f3f4"></div>
<!-- table -->
<div class="a" style="left:454px;top:755.5px;width:1456px;height:1.2px;background:#e3e5e8"></div>
<div class="a" style="left:454px;top:803px;width:1456px;height:1.2px;background:#e3e5e8"></div>
<div class="a" style="left:786px;top:756px;width:1px;height:245px;background:#eef0f1"></div>
<svg class="a" style="left:454px;top:771.5px" width="22" height="22" viewBox="0 0 24 24"><path fill="#80868b" d="M15.5 14h-.79l-.28-.27C15.41 12.59 16 11.11 16 9.5 16 5.91 13.09 3 9.5 3S3 5.91 3 9.5 5.91 16 9.5 16c1.61 0 3.09-.59 4.23-1.57l.27.28v.79l5 4.99L20.49 19l-4.99-5zm-6 0C7.01 14 5 11.99 5 9.5S7.01 5 9.5 5 14 7.01 14 9.5 11.99 14 9.5 14z"/></svg>
<div class="a" style="left:485px;top:772.2px;font-size:15px;color:#5f6368;letter-spacing:0.1px">Search…</div>
<div class="a" style="left:1616.5px;top:771.3px;font-size:15.5px;color:#5f6368">Rows per page:</div>
<div class="a" style="left:1735.5px;top:768.5px;font-size:15.5px;color:#202124">10</div>
<div class="a" style="left:1735.5px;top:791.5px;width:59.5px;height:2px;background:#b5b8bc"></div>
<div class="a" style="left:1778px;top:776px;border-left:6px solid transparent;border-right:6px solid transparent;border-top:6px solid #5f6368"></div>
<div class="a" style="left:1829.5px;top:771.3px;font-size:15.5px;color:#3c4043">1-7 of 7</div>
<div class="a" style="left:473px;top:815px;font-size:16.5px;color:#5f6368">Session default channel grouping</div>
<div class="a" style="left:726px;top:823px;border-left:4.5px solid transparent;border-right:4.5px solid transparent;border-top:4.5px solid #5f6368"></div>
<svg class="a" style="left:751px;top:814px" width="21" height="21" viewBox="0 0 21 21"><path d="M10.5 1v19M1 10.5h19" stroke="#1a73e8" stroke-width="2.2"/></svg>
<svg class="a" style="left:842px;top:818px" width="12" height="14" viewBox="0 0 12 14"><path d="M6 1.5v11M2 8.5l4 4 4-4" fill="none" stroke="#202124" stroke-width="1.3"/></svg>
<div class="a" style="left:855px;top:815.3px;font-size:16px;font-weight:bold;color:#202124">Users</div>
<div class="a" style="left:964px;top:815px;font-size:16.5px;color:#5f6368">Sessions</div>
<div class="a" style="left:1071px;top:815px;font-size:16.5px;color:#5f6368">Engaged sessions</div>
<div class="a" style="left:1188px;top:809.5px;width:200px;font-size:16.5px;color:#5f6368;text-align:right;line-height:25px;white-space:normal">Average<br>engagement time<br>per session</div>
<div class="a" style="left:1370px;top:810px;width:200px;font-size:16.5px;color:#5f6368;text-align:right;line-height:25px;white-space:normal">Engaged sessions<br>per user</div>
<div class="a" style="left:1609px;top:815px;font-size:16.5px;color:#5f6368">Events per session</div>
<div class="a" style="left:1787px;top:815px;font-size:16.5px;color:#5f6368;width:123px;overflow:hidden;-webkit-mask-image:linear-gradient(90deg,#000 70%,transparent)">Engagement rate</div>
<div class="a" style="left:517px;top:923.5px;font-size:17px;color:#202124">Totals</div>
<div class="a" style="left:454px;top:972px;width:1456px;height:29px;background:linear-gradient(#f4f5f6,#eceef0)"></div>
<div class="a" style="left:473px;top:985px;font-size:17px;color:#202124">1</div>
<div class="a" style="left:517px;top:984.7px;font-size:16.3px;color:#202124;-webkit-text-stroke:0.55px #202124">Organic Search</div>
<!-- pix -->
<div class="a" style="left:840px;top:909px;width:17px;height:7px;background:#fafafa"></div>
<div class="a" style="left:857px;top:909px;width:17px;height:7px;background:#f2f2f3"></div>
<div class="a" style="left:874px;top:909px;width:17px;height:7px;background:#eeeef0"></div>
<div class="a" style="left:891px;top:909px;width:17px;height:7px;background:#f6f7f8"></div>
<div class="a" style="left:857px;top:916px;width:17px;height:17px;background:#dcdcde"></div>
<div class="a" style="left:874px;top:916px;width:17px;height:17px;background:#c6c6c9"></div>
<div class="a" style="left:891px;top:916px;width:17px;height:17px;background:#e2e2e4"></div>
<div class="a" style="left:806px;top:933px;width:17px;height:17px;background:#efeff0"></div>
<div class="a" style="left:823px;top:933px;width:17px;height:17px;background:#d2d2d4"></div>
<div class="a" style="left:840px;top:933px;width:17px;height:17px;background:#e6e7e9"></div>
<div class="a" style="left:857px;top:933px;width:17px;height:17px;background:#e6e7e9"></div>
<div class="a" style="left:874px;top:933px;width:17px;height:17px;background:#e2e2e4"></div>
<div class="a" style="left:891px;top:933px;width:17px;height:17px;background:#efeff0"></div>
<div class="a" style="left:806px;top:950px;width:17px;height:17px;background:#f8f8f9"></div>
<div class="a" style="left:823px;top:950px;width:17px;height:17px;background:#ebeced"></div>
<div class="a" style="left:840px;top:950px;width:17px;height:17px;background:#efeff0"></div>
<div class="a" style="left:857px;top:950px;width:17px;height:17px;background:#efeff0"></div>
<div class="a" style="left:874px;top:950px;width:17px;height:17px;background:#e8e8ea"></div>
<div class="a" style="left:891px;top:950px;width:17px;height:17px;background:#f3f3f4"></div>
<div class="a" style="left:806px;top:967px;width:17px;height:17px;background:#f6f7f8"></div>
<div class="a" style="left:823px;top:967px;width:17px;height:17px;background:#f6f7f8"></div>
<div class="a" style="left:840px;top:967px;width:17px;height:17px;background:#f6f7f8"></div>
<div class="a" style="left:857px;top:967px;width:17px;height:17px;background:#f6f7f8"></div>
<div class="a" style="left:874px;top:967px;width:17px;height:17px;background:#f6f7f8"></div>
<div class="a" style="left:891px;top:967px;width:17px;height:17px;background:#f6f7f8"></div>
<div class="a" style="left:806px;top:984px;width:17px;height:15px;background:#e8e9ea"></div>
<div class="a" style="left:823px;top:984px;width:17px;height:15px;background:#e8e9ea"></div>
<div class="a" style="left:840px;top:984px;width:17px;height:15px;background:#e6e6e8"></div>
<div class="a" style="left:857px;top:984px;width:17px;height:15px;background:#d0d0d3"></div>
<div class="a" style="left:874px;top:984px;width:17px;height:15px;background:#c4c4c7"></div>
<div class="a" style="left:891px;top:984px;width:17px;height:15px;background:#d8d8da"></div>
<div class="a" style="left:975px;top:909px;width:17px;height:7px;background:#f6f7f8"></div>
<div class="a" style="left:992px;top:909px;width:16px;height:7px;background:#eeeff0"></div>
<div class="a" style="left:1008px;top:909px;width:17px;height:7px;background:#eeeff0"></div>
<div class="a" style="left:1025px;top:909px;width:17px;height:7px;background:#f3f3f4"></div>
<div class="a" style="left:975px;top:916px;width:17px;height:17px;background:#ebebed"></div>
<div class="a" style="left:992px;top:916px;width:16px;height:17px;background:#d2d2d5"></div>
<div class="a" style="left:1008px;top:916px;width:17px;height:17px;background:#d3d3d6"></div>
<div class="a" style="left:1025px;top:916px;width:17px;height:17px;background:#eaeaec"></div>
<div class="a" style="left:941px;top:933px;width:17px;height:17px;background:#efeff0"></div>
<div class="a" style="left:958px;top:933px;width:17px;height:17px;background:#cfcfd2"></div>
<div class="a" style="left:975px;top:933px;width:17px;height:17px;background:#e6e7e9"></div>
<div class="a" style="left:992px;top:933px;width:16px;height:17px;background:#e6e7e9"></div>
<div class="a" style="left:1008px;top:933px;width:17px;height:17px;background:#e2e2e4"></div>
<div class="a" style="left:1025px;top:933px;width:17px;height:17px;background:#efeff0"></div>
<div class="a" style="left:941px;top:950px;width:17px;height:17px;background:#f6f6f7"></div>
<div class="a" style="left:958px;top:950px;width:17px;height:17px;background:#ebeced"></div>
<div class="a" style="left:975px;top:950px;width:17px;height:17px;background:#efeff0"></div>
<div class="a" style="left:992px;top:950px;width:16px;height:17px;background:#efeff0"></div>
<div class="a" style="left:1008px;top:950px;width:17px;height:17px;background:#e6e6e8"></div>
<div class="a" style="left:1025px;top:950px;width:17px;height:17px;background:#f3f3f4"></div>
<div class="a" style="left:941px;top:967px;width:17px;height:17px;background:#f6f7f8"></div>
<div class="a" style="left:958px;top:967px;width:17px;height:17px;background:#f6f7f8"></div>
<div class="a" style="left:975px;top:967px;width:17px;height:17px;background:#f6f7f8"></div>
<div class="a" style="left:992px;top:967px;width:16px;height:17px;background:#f6f7f8"></div>
<div class="a" style="left:1008px;top:967px;width:17px;height:17px;background:#f6f7f8"></div>
<div class="a" style="left:1025px;top:967px;width:17px;height:17px;background:#f6f7f8"></div>
<div class="a" style="left:941px;top:984px;width:17px;height:15px;background:#e9eaeb"></div>
<div class="a" style="left:958px;top:984px;width:17px;height:15px;background:#e9eaeb"></div>
<div class="a" style="left:975px;top:984px;width:17px;height:15px;background:#e9eaeb"></div>
<div class="a" style="left:992px;top:984px;width:16px;height:15px;background:#c8c8cb"></div>
<div class="a" style="left:1008px;top:984px;width:17px;height:15px;background:#c0c0c3"></div>
<div class="a" style="left:1025px;top:984px;width:17px;height:15px;background:#d8d8da"></div>
<div class="a" style="left:1160px;top:909px;width:16px;height:7px;background:#f0f1f2"></div>
<div class="a" style="left:1176px;top:909px;width:17px;height:7px;background:#eeeff0"></div>
<div class="a" style="left:1193px;top:909px;width:17px;height:7px;background:#eeeff0"></div>
<div class="a" style="left:1160px;top:916px;width:16px;height:17px;background:#dadadd"></div>
<div class="a" style="left:1176px;top:916px;width:17px;height:17px;background:#d4d4d7"></div>
<div class="a" style="left:1193px;top:916px;width:17px;height:17px;background:#d6d6d9"></div>
<div class="a" style="left:1109px;top:933px;width:17px;height:17px;background:#fafafa"></div>
<div class="a" style="left:1126px;top:933px;width:17px;height:17px;background:#d4d4d7"></div>
<div class="a" style="left:1143px;top:933px;width:17px;height:17px;background:#dfdfe1"></div>
<div class="a" style="left:1160px;top:933px;width:16px;height:17px;background:#eeeef0"></div>
<div class="a" style="left:1176px;top:933px;width:17px;height:17px;background:#e2e3e5"></div>
<div class="a" style="left:1193px;top:933px;width:17px;height:17px;background:#e8e9eb"></div>
<div class="a" style="left:1109px;top:950px;width:17px;height:17px;background:#fafafa"></div>
<div class="a" style="left:1126px;top:950px;width:17px;height:17px;background:#ebeced"></div>
<div class="a" style="left:1143px;top:950px;width:17px;height:17px;background:#ececee"></div>
<div class="a" style="left:1160px;top:950px;width:16px;height:17px;background:#eeeff0"></div>
<div class="a" style="left:1176px;top:950px;width:17px;height:17px;background:#e9eaeb"></div>
<div class="a" style="left:1193px;top:950px;width:17px;height:17px;background:#ececee"></div>
<div class="a" style="left:1109px;top:967px;width:17px;height:17px;background:#f3f4f5"></div>
<div class="a" style="left:1126px;top:967px;width:17px;height:17px;background:#fafafa"></div>
<div class="a" style="left:1143px;top:967px;width:17px;height:17px;background:#fafafa"></div>
<div class="a" style="left:1160px;top:967px;width:16px;height:17px;background:#fafafa"></div>
<div class="a" style="left:1176px;top:967px;width:17px;height:17px;background:#fafafa"></div>
<div class="a" style="left:1193px;top:967px;width:17px;height:17px;background:#fafafa"></div>
<div class="a" style="left:1109px;top:984px;width:17px;height:15px;background:#e9eaeb"></div>
<div class="a" style="left:1126px;top:984px;width:17px;height:15px;background:#e6e7e9"></div>
<div class="a" style="left:1143px;top:984px;width:17px;height:15px;background:#e6e7e9"></div>
<div class="a" style="left:1160px;top:984px;width:16px;height:15px;background:#d3d3d5"></div>
<div class="a" style="left:1176px;top:984px;width:17px;height:15px;background:#cdcdd0"></div>
<div class="a" style="left:1193px;top:984px;width:17px;height:15px;background:#d8d8da"></div>
<div class="a" style="left:1327px;top:909px;width:17px;height:7px;background:#f0f1f2"></div>
<div class="a" style="left:1344px;top:909px;width:17px;height:7px;background:#eeeff0"></div>
<div class="a" style="left:1361px;top:909px;width:17px;height:7px;background:#f2f2f3"></div>
<div class="a" style="left:1378px;top:909px;width:17px;height:7px;background:#f2f2f3"></div>
<div class="a" style="left:1327px;top:916px;width:17px;height:17px;background:#d7d7da"></div>
<div class="a" style="left:1344px;top:916px;width:17px;height:17px;background:#d9d9dc"></div>
<div class="a" style="left:1361px;top:916px;width:17px;height:17px;background:#d2d2d5"></div>
<div class="a" style="left:1378px;top:916px;width:17px;height:17px;background:#dcdcde"></div>
<div class="a" style="left:1327px;top:933px;width:17px;height:17px;background:#fafafa"></div>
<div class="a" style="left:1344px;top:933px;width:17px;height:17px;background:#e6e7e9"></div>
<div class="a" style="left:1361px;top:933px;width:17px;height:17px;background:#e4e5e7"></div>
<div class="a" style="left:1378px;top:933px;width:17px;height:17px;background:#eeeef0"></div>
<div class="a" style="left:1327px;top:950px;width:17px;height:17px;background:#fafafa"></div>
<div class="a" style="left:1344px;top:950px;width:17px;height:17px;background:#e6e6e8"></div>
<div class="a" style="left:1361px;top:950px;width:17px;height:17px;background:#e8e9eb"></div>
<div class="a" style="left:1378px;top:950px;width:17px;height:17px;background:#eeeef0"></div>
<div class="a" style="left:1327px;top:967px;width:17px;height:17px;background:#f6f7f8"></div>
<div class="a" style="left:1344px;top:967px;width:17px;height:17px;background:#fdfdfd"></div>
<div class="a" style="left:1361px;top:967px;width:17px;height:17px;background:#fdfdfd"></div>
<div class="a" style="left:1378px;top:967px;width:17px;height:17px;background:#fafafa"></div>
<div class="a" style="left:1327px;top:984px;width:17px;height:15px;background:#d6d6d9"></div>
<div class="a" style="left:1344px;top:984px;width:17px;height:15px;background:#d2d2d5"></div>
<div class="a" style="left:1361px;top:984px;width:17px;height:15px;background:#cdcdd0"></div>
<div class="a" style="left:1378px;top:984px;width:17px;height:15px;background:#d8d8da"></div>
<div class="a" style="left:1530px;top:909px;width:16px;height:7px;background:#f6f7f8"></div>
<div class="a" style="left:1546px;top:909px;width:17px;height:7px;background:#ededef"></div>
<div class="a" style="left:1563px;top:909px;width:17px;height:7px;background:#f3f3f4"></div>
<div class="a" style="left:1513px;top:916px;width:17px;height:17px;background:#fafafa"></div>
<div class="a" style="left:1530px;top:916px;width:16px;height:17px;background:#eeeff1"></div>
<div class="a" style="left:1546px;top:916px;width:17px;height:17px;background:#c8c8cb"></div>
<div class="a" style="left:1563px;top:916px;width:17px;height:17px;background:#e6e6e8"></div>
<div class="a" style="left:1513px;top:933px;width:17px;height:17px;background:#f3f4f5"></div>
<div class="a" style="left:1530px;top:933px;width:16px;height:17px;background:#d8d8db"></div>
<div class="a" style="left:1546px;top:933px;width:17px;height:17px;background:#d8d8db"></div>
<div class="a" style="left:1563px;top:933px;width:17px;height:17px;background:#eeeff1"></div>
<div class="a" style="left:1513px;top:950px;width:17px;height:17px;background:#f6f7f8"></div>
<div class="a" style="left:1530px;top:950px;width:16px;height:17px;background:#e6e7e9"></div>
<div class="a" style="left:1546px;top:950px;width:17px;height:17px;background:#e4e5e7"></div>
<div class="a" style="left:1563px;top:950px;width:17px;height:17px;background:#f3f3f4"></div>
<div class="a" style="left:1513px;top:967px;width:17px;height:17px;background:#f8f8f9"></div>
<div class="a" style="left:1530px;top:967px;width:16px;height:17px;background:#fdfdfd"></div>
<div class="a" style="left:1546px;top:967px;width:17px;height:17px;background:#fdfdfd"></div>
<div class="a" style="left:1563px;top:967px;width:17px;height:17px;background:#fafafa"></div>
<div class="a" style="left:1496px;top:984px;width:17px;height:15px;background:#e6e7e9"></div>
<div class="a" style="left:1513px;top:984px;width:17px;height:15px;background:#e6e7e9"></div>
<div class="a" style="left:1530px;top:984px;width:16px;height:15px;background:#e6e7e9"></div>
<div class="a" style="left:1546px;top:984px;width:17px;height:15px;background:#c9c9cc"></div>
<div class="a" style="left:1563px;top:984px;width:17px;height:15px;background:#dedee0"></div>
<div class="a" style="left:1714px;top:909px;width:16px;height:7px;background:#f0f1f2"></div>
<div class="a" style="left:1730px;top:909px;width:17px;height:7px;background:#eeeff0"></div>
<div class="a" style="left:1747px;top:909px;width:17px;height:7px;background:#f8f8f9"></div>
<div class="a" style="left:1697px;top:916px;width:17px;height:17px;background:#fafafa"></div>
<div class="a" style="left:1714px;top:916px;width:16px;height:17px;background:#d2d2d5"></div>
<div class="a" style="left:1730px;top:916px;width:17px;height:17px;background:#c9c9cc"></div>
<div class="a" style="left:1747px;top:916px;width:17px;height:17px;background:#f6f7f8"></div>
<div class="a" style="left:1697px;top:933px;width:17px;height:17px;background:#e9eaeb"></div>
<div class="a" style="left:1714px;top:933px;width:16px;height:17px;background:#d8d8db"></div>
<div class="a" style="left:1730px;top:933px;width:17px;height:17px;background:#dcdcde"></div>
<div class="a" style="left:1747px;top:933px;width:17px;height:17px;background:#fafafa"></div>
<div class="a" style="left:1697px;top:950px;width:17px;height:17px;background:#ededef"></div>
<div class="a" style="left:1714px;top:950px;width:16px;height:17px;background:#dedee0"></div>
<div class="a" style="left:1730px;top:950px;width:17px;height:17px;background:#e8e9eb"></div>
<div class="a" style="left:1747px;top:950px;width:17px;height:17px;background:#fafafa"></div>
<div class="a" style="left:1697px;top:967px;width:17px;height:17px;background:#fafafa"></div>
<div class="a" style="left:1714px;top:967px;width:16px;height:17px;background:#fdfdfd"></div>
<div class="a" style="left:1730px;top:967px;width:17px;height:17px;background:#fdfdfd"></div>
<div class="a" style="left:1747px;top:967px;width:17px;height:17px;background:#fafafa"></div>
<div class="a" style="left:1697px;top:984px;width:17px;height:15px;background:#eeeff0"></div>
<div class="a" style="left:1714px;top:984px;width:16px;height:15px;background:#d3d3d5"></div>
<div class="a" style="left:1730px;top:984px;width:17px;height:15px;background:#c3c3c6"></div>
<div class="a" style="left:1747px;top:984px;width:17px;height:15px;background:#e6e7e9"></div>
<div class="a" style="left:1865px;top:909px;width:17px;height:7px;background:#f3f4f5"></div>
<div class="a" style="left:1882px;top:909px;width:16px;height:7px;background:#f6f7f8"></div>
<div class="a" style="left:1865px;top:916px;width:17px;height:17px;background:#e1e2e4"></div>
<div class="a" style="left:1882px;top:916px;width:16px;height:17px;background:#eeeff0"></div>
<div class="a" style="left:1865px;top:933px;width:17px;height:17px;background:#f3f4f5"></div>
<div class="a" style="left:1882px;top:933px;width:16px;height:17px;background:#f6f7f8"></div>
<div class="a" style="left:1865px;top:950px;width:17px;height:17px;background:#f6f7f8"></div>
<div class="a" style="left:1882px;top:950px;width:16px;height:17px;background:#f6f7f8"></div>
<div class="a" style="left:1865px;top:967px;width:17px;height:17px;background:#fafafa"></div>
<div class="a" style="left:1882px;top:967px;width:16px;height:17px;background:#fafafa"></div>
<div class="a" style="left:1865px;top:984px;width:17px;height:15px;background:#dfdfe1"></div>
<div class="a" style="left:1882px;top:984px;width:16px;height:15px;background:#e8e9eb"></div>
<div class="a" style="left:1910px;top:900px;width:38px;height:100px;background:#fff"></div>
<div class="a" style="left:0;top:998px;width:1999px;height:1px;background:#fff"></div>
<div class="a" style="left:0;top:999px;width:1999px;height:2px;background:#435a63"></div>

<div class="a" style="left:1995px;top:70px;width:4px;height:650px;background:#dadce0;border-radius:2px"></div>


<!-- feedback -->
<div class="a" style="left:1941.2px;top:900.2px;width:48px;height:48px;border-radius:50%;background:#fff;box-shadow:0 1px 3px rgba(60,64,67,.3),0 2px 6px rgba(60,64,67,.15)"></div>
<svg class="a" style="left:1951.5px;top:910.5px" width="28" height="28" viewBox="0 0 24 24"><path fill="#3c4043" d="M20 2H4c-1.1 0-1.99.9-1.99 2L2 22l4-4h14c1.1 0 2-.9 2-2V4c0-1.1-.9-2-2-2zm0 14H5.17L4 17.17V4h16v12zM11 5h2v6h-2zm0 8h2v2h-2z"/></svg>
</body></html>
